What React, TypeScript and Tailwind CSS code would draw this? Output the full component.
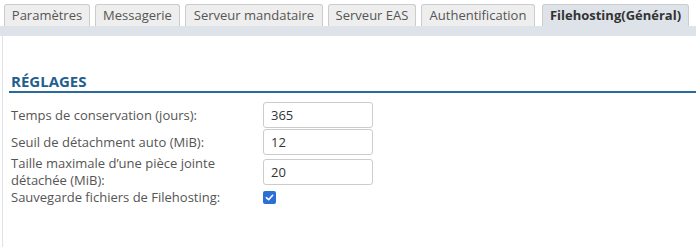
const tabs = [
  { label: 'Paramètres', w: 'w-[86px]' },
  { label: 'Messagerie', w: 'w-[85px]' },
  { label: 'Serveur mandataire', w: 'w-[138px]' },
  { label: 'Serveur EAS', w: 'w-[88px]' },
  { label: 'Authentification', w: 'w-[114px]' },
]

function Row({ label, children, className = '' }: { label: React.ReactNode; children: React.ReactNode; className?: string }) {
  return (
    <div className={`flex items-center ${className}`}>
      <div className="w-[252px] text-[13px] leading-[17px] text-[#555]">{label}</div>
      {children}
    </div>
  )
}

function Field({ value }: { value: string }) {
  return (
    <input
      defaultValue={value}
      className="w-[110px] h-[26px] border border-[#ccc] rounded-[3px] px-[7px] text-[13px] text-[#333] bg-white outline-none"
    />
  )
}

export default function App() {
  return (
    <div className="w-[696px] h-[249px] bg-white overflow-hidden font-['Open_Sans',sans-serif]">
      <div className="flex items-end gap-[5px] pl-[4px] pt-[4px] h-[26px]">
        {tabs.map((t) => (
          <div
            key={t.label}
            className={`${t.w} h-[22px] flex items-center justify-center bg-[#eee] border border-b-0 border-[#ccc] rounded-t-[3px] text-[13px] text-[#555]`}
          >
            {t.label}
          </div>
        ))}
        <div className="w-[147px] ml-[2px] h-[22px] flex items-center justify-center bg-[#dde3e9] border border-b-0 border-[#ccc] rounded-t-[3px] text-[13px] font-bold text-[#333]">
          Filehosting(Général)
        </div>
      </div>
      <div className="h-[10px] bg-[#dde3e9]" />
      <div className="ml-[2px] border-l border-[#dde3e9] h-[211px] pl-[6px]">
        <div className="pt-[36px]">
          <h2 className="pl-[2px] text-[15px] leading-[18px] font-bold text-[#1f5f8f] border-b-2 border-[#2a6a9a] pb-[1px]">
            RÉGLAGES
          </h2>
        </div>
        <div className="pl-[2px] pt-[9px] flex flex-col gap-[1px]">
          <Row label="Temps de conservation (jours):">
            <Field value="365" />
          </Row>
          <Row label="Seuil de détachment auto (MiB):">
            <Field value="12" />
          </Row>
          <Row className="-my-[1px]" label={<>Taille maximale d’une pièce jointe<br />détachée (MiB):</>}>
            <Field value="20" />
          </Row>
          <Row label="Sauvegarde fichiers de Filehosting:">
            <div className="w-[13px] h-[13px] rounded-[2px] bg-[#2b6fd6] flex items-center justify-center">
              <svg width="9" height="9" viewBox="0 0 10 10">
                <path d="M1.5 5.2 L4 7.5 L8.5 2.5" fill="none" stroke="white" strokeWidth="1.8" strokeLinecap="round" strokeLinejoin="round" />
              </svg>
            </div>
          </Row>
        </div>
      </div>
    </div>
  )
}
